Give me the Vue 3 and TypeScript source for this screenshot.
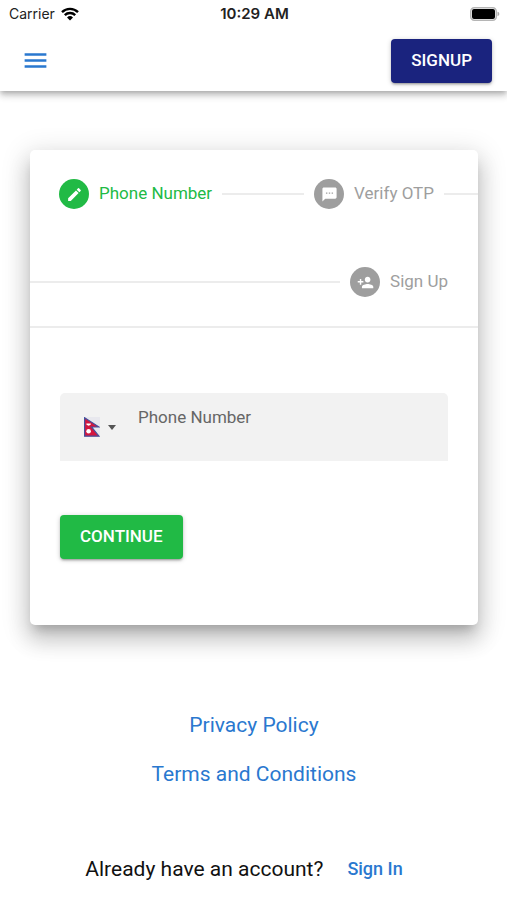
<script setup lang="ts">
import { ref } from 'vue'

interface Step {
  id: string
  label: string
  icon: string
}

const steps: Record<'phone' | 'otp' | 'signup', Step> = {
  phone: {
    id: 'phone',
    label: 'Phone Number',
    icon: 'M3 17.25V21h3.75L17.81 9.94l-3.75-3.75L3 17.25zM20.71 7.04a1 1 0 0 0 0-1.41l-2.34-2.34a1 1 0 0 0-1.41 0l-1.83 1.83 3.75 3.75 1.83-1.83z',
  },
  otp: {
    id: 'otp',
    label: 'Verify OTP',
    icon: 'M20 2H4c-1.1 0-1.99.9-1.99 2L2 22l4-4h14c1.1 0 2-.9 2-2V4c0-1.1-.9-2-2-2zM9 11H7V9h2v2zm4 0h-2V9h2v2zm4 0h-2V9h2v2z',
  },
  signup: {
    id: 'signup',
    label: 'Sign Up',
    icon: 'M15 12c2.21 0 4-1.79 4-4s-1.79-4-4-4-4 1.79-4 4 1.79 4 4 4zm-9-2V7H4v3H1v2h3v3h2v-3h3v-2H6zm9 4c-2.67 0-8 1.34-8 4v2h16v-2c0-2.66-5.33-4-8-4z',
  },
}

const current = ref('phone')
const country = ref('NP')
const phone = ref('')

function submit(): void {
  if (phone.value.trim()) current.value = 'otp'
}
</script>

<template>
  <div class="page">
    <header class="top">
      <div class="status">
        <div class="carrier">
          <span>Carrier</span>
          <svg class="wifi" viewBox="0 0 18 14" aria-hidden="true">
            <path d="M1 5.2a11.4 11.4 0 0 1 16 0M3.8 8.1a7.4 7.4 0 0 1 10.4 0" fill="none" stroke="#000" stroke-width="2.4" />
            <path d="M6 10.4a4.3 4.3 0 0 1 6 0L9 13.6z" />
          </svg>
        </div>
        <span class="clock">10:29 AM</span>
        <svg class="battery" viewBox="0 0 30 14" aria-hidden="true">
          <rect x=".75" y=".75" width="25.5" height="12.5" rx="3.5" fill="#fff" stroke="#b5b5b5" stroke-width="1.5" />
          <rect x="2" y="2" width="23" height="10" rx="2" />
          <path d="M27.5 4.8c2.4.6 2.4 3.8 0 4.4z" fill="#aaa" />
        </svg>
      </div>
      <nav class="toolbar">
        <button class="menu" type="button" aria-label="Menu">
          <svg viewBox="0 0 24 24"><path d="M3 18h18v-2H3v2zm0-5h18v-2H3v2zm0-7v2h18V6H3z" /></svg>
        </button>
        <button class="btn navy" type="button">SIGNUP</button>
      </nav>
    </header>

    <main class="content">
      <section class="card">
        <div class="stepper">
          <div class="row start">
            <div class="step" :class="{ active: current === steps.phone.id }">
              <span class="dot"><svg viewBox="0 0 24 24"><path :d="steps.phone.icon" /></svg></span>
              <span class="name">{{ steps.phone.label }}</span>
            </div>
            <span class="line"></span>
            <div class="step" :class="{ active: current === steps.otp.id }">
              <span class="dot"><svg viewBox="0 0 24 24"><path :d="steps.otp.icon" /></svg></span>
              <span class="name">{{ steps.otp.label }}</span>
            </div>
            <span class="line tail"></span>
          </div>
          <div class="row end">
            <span class="line"></span>
            <div class="step" :class="{ active: current === steps.signup.id }">
              <span class="dot"><svg viewBox="0 0 24 24"><path :d="steps.signup.icon" /></svg></span>
              <span class="name">{{ steps.signup.label }}</span>
            </div>
          </div>
        </div>

        <form class="form" @submit.prevent="submit">
          <div class="field">
            <div class="country">
              <svg class="flag" viewBox="0 0 16 20" aria-hidden="true">
                <rect width="16" height="20" fill="#e8e8ee" />
                <path d="M.6.8 15 10H7.5L15 19.2H.6z" fill="#d3163f" stroke="#45509c" stroke-width="1.2" />
                <path d="M2.4 6.400h4.400v1.200q-2.200 2.200-4.400 0z" fill="#fff" />
                <circle cx="4.600" cy="14.200" r="2.300" fill="#fff" />
              </svg>
              <svg class="caret" viewBox="0 0 8 5" aria-hidden="true"><path d="M0 0h8L4 5z" /></svg>
              <select v-model="country" class="picker" aria-label="Country">
                <option value="NP">Nepal</option>
              </select>
            </div>
            <div class="entry">
              <label for="phone">Phone Number</label>
              <input id="phone" v-model="phone" type="tel" autocomplete="tel" />
            </div>
          </div>
          <button class="btn green" type="submit">CONTINUE</button>
        </form>
      </section>

      <footer class="footer">
        <a href="#privacy">Privacy Policy</a>
        <a href="#terms">Terms and Conditions</a>
        <p class="account">
          <span>Already have an account?</span>
          <a class="signin" href="#signin">Sign In</a>
        </p>
      </footer>
    </main>
  </div>
</template>

<style>
body {
  margin: 0;
  background: #fff;
}
</style>

<style scoped>
.page {
  font-family: Roboto, sans-serif;
  font-size: 17px;
  line-height: 24px;
  color: #111;
}

.page * {
  box-sizing: border-box;
}

.top {
  background: #fff;
  box-shadow: 0 2px 5px -1px rgba(0, 0, 0, 0.2), 0 5px 6px rgba(0, 0, 0, 0.14), 0 1px 12px rgba(0, 0, 0, 0.12);
}

.status {
  display: grid;
  grid-template-columns: 1fr auto 1fr;
  align-items: center;
  height: 28px;
  padding: 0 7px 0 9px;
  font-family: Inter, sans-serif;
  font-size: 14px;
  color: #222;
}

.carrier {
  display: flex;
  align-items: center;
  gap: 6px;
}

.wifi {
  width: 18px;
  height: 14px;
}

.clock {
  font-size: 15px;
  font-weight: 600;
}

.battery {
  justify-self: end;
  width: 30px;
  height: 14px;
}

.toolbar {
  display: flex;
  align-items: center;
  justify-content: space-between;
  height: 63px;
  padding: 2px 15px 0 21px;
}

.menu {
  display: flex;
  padding: 0;
  border: 0;
  background: none;
  cursor: pointer;
}

.menu svg {
  width: 29px;
  height: 29px;
  fill: #2a78cf;
}

.btn {
  height: 44px;
  padding: 0 20px 2px;
  border: 0;
  border-radius: 4px;
  font: 500 17px/24px Roboto, sans-serif;
  color: #fff;
  cursor: pointer;
  box-shadow: 0 1px 5px rgba(0, 0, 0, 0.2), 0 2px 2px rgba(0, 0, 0, 0.14), 0 3px 1px -2px rgba(0, 0, 0, 0.12);
}

.navy {
  background: #1a237e;
}

.green {
  background: #21ba45;
}

.content {
  padding: 59px 29px 0 30px;
}

.card {
  border-radius: 5px;
  background: #fff;
  box-shadow: 0 9px 10px -5px rgba(0, 0, 0, 0.2), 0 15px 21px 2px rgba(0, 0, 0, 0.14), 0 6px 27px 5px rgba(0, 0, 0, 0.12);
}

.stepper {
  border-bottom: 2px solid #ececec;
}

.row {
  display: flex;
  align-items: center;
  gap: 10px;
  height: 88px;
}

.start {
  padding-left: 29px;
}

.end {
  padding-right: 30px;
}

.step {
  display: flex;
  align-items: center;
  gap: 10px;
  white-space: nowrap;
  color: #9e9e9e;
}

.name {
  padding-bottom: 2px;
}

.dot {
  display: flex;
  align-items: center;
  justify-content: center;
  width: 30px;
  height: 30px;
  border-radius: 50%;
  background: #9e9e9e;
}

.dot svg {
  width: 17px;
  height: 17px;
  fill: #fff;
}

.active {
  color: #21ba45;
}

.active .dot {
  background: #21ba45;
}

.line {
  flex: 1;
  height: 2px;
  background: #ececec;
}

.tail {
  flex: 0 0 34px;
}

.form {
  display: flex;
  flex-direction: column;
  align-items: flex-start;
  gap: 54px;
  padding: 65px 30px 66px;
}

.field {
  display: flex;
  align-items: center;
  width: 100%;
  height: 68px;
  padding: 0 15px 0 24px;
  border-radius: 5px 5px 0 0;
  background: #f2f2f2;
}

.country {
  position: relative;
  display: flex;
  align-items: center;
  gap: 8px;
  width: 54px;
}

.flag {
  width: 16px;
  height: 20px;
}

.caret {
  width: 8px;
  height: 5px;
  fill: #555;
}

.picker {
  position: absolute;
  inset: 0;
  width: 100%;
  opacity: 0;
  cursor: pointer;
}

.entry {
  display: flex;
  flex: 1;
  flex-direction: column;
  min-width: 0;
  color: #666;
}

.entry input {
  width: 100%;
  height: 20px;
  padding: 0;
  border: 0;
  outline: 0;
  background: none;
  font: inherit;
  color: #222;
}

.footer {
  display: flex;
  flex-direction: column;
  align-items: center;
  gap: 25px;
  padding: 88px 0 19px;
  font-size: 21px;
}

.footer a {
  color: #2a78cf;
  text-decoration: none;
}

.account {
  display: flex;
  align-items: center;
  gap: 24px;
  margin: 46px 0 0;
  padding-right: 20px;
}

.account .signin {
  font-size: 18px;
  font-weight: 500;
}
</style>
